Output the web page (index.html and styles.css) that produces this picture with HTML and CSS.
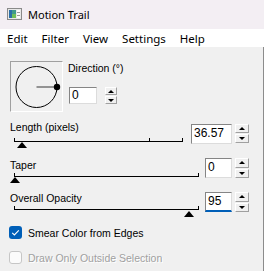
FILE: index.html
```html
<!DOCTYPE html>
<html lang="en">
<head>
  <meta charset="UTF-8" />
  <title>Motion Trail</title>
  <link rel="stylesheet" href="styles.css">
</head>
<body>
  <div class="titlebar">
    <svg class="app-icon" width="15" height="12" viewBox="0 0 15 12">
      <rect x="0.5" y="0.5" width="14" height="11" fill="#e8e8e8" stroke="#8a8a8a" />
      <rect x="2" y="2" width="7" height="8" fill="#3f9a8c" />
      <rect x="2" y="2" width="3" height="8" fill="#2b6fa8" />
      <rect x="5" y="6" width="4" height="4" fill="#6fbf5a" />
      <rect x="10" y="2" width="3" height="8" fill="#fdfdfd" />
      <line x1="10" y1="4.5" x2="13" y2="4.5" stroke="#9a9a9a" />
      <line x1="10" y1="7.5" x2="13" y2="7.5" stroke="#9a9a9a" />
    </svg>
    <span class="title">Motion Trail</span>
  </div>

  <div class="menubar">
    <span>Edit</span>
    <span>Filter</span>
    <span>View</span>
    <span>Settings</span>
    <span>Help</span>
  </div>

  <div class="dialog">
    <div class="dir-row">
      <div class="dial">
        <svg width="51" height="49" viewBox="0 0 51 49">
          <circle cx="25.5" cy="25" r="20.5" fill="none" stroke="#000" stroke-width="1" />
          <line x1="25.5" y1="25" x2="46" y2="25" stroke="#555" stroke-width="1.2" />
          <circle cx="46" cy="25" r="3.2" fill="#000" />
        </svg>
      </div>
      <div class="dir-controls">
        <div class="label">Direction (°)</div>
        <div class="spin-field">
          <div class="textbox dir-box">0</div>
          <div class="spin dir-spin">
            <span class="spin-btn"><i class="arrow-up"></i></span>
            <span class="spin-btn"><i class="arrow-down"></i></span>
          </div>
        </div>
      </div>
    </div>

    <div class="slider-row row-length">
      <div class="slider">
        <div class="label">Length (pixels)</div>
        <div class="track"><span class="tick" style="left: 134px"></span></div>
        <div class="thumb" style="margin-left: 7px"></div>
      </div>
      <div class="textbox value">36.57</div>
      <div class="spin">
        <span class="spin-btn"><i class="arrow-up"></i></span>
        <span class="spin-btn"><i class="arrow-down"></i></span>
      </div>
    </div>

    <div class="slider-row row-taper">
      <div class="slider">
        <div class="label">Taper</div>
        <div class="track"></div>
        <div class="thumb" style="margin-left: 0px"></div>
      </div>
      <div class="textbox value">0</div>
      <div class="spin">
        <span class="spin-btn"><i class="arrow-up"></i></span>
        <span class="spin-btn"><i class="arrow-down"></i></span>
      </div>
    </div>

    <div class="slider-row row-opacity">
      <div class="slider">
        <div class="label">Overall Opacity</div>
        <div class="track"></div>
        <div class="thumb" style="margin-left: 174px"></div>
      </div>
      <div class="textbox value focused">95</div>
      <div class="spin">
        <span class="spin-btn"><i class="arrow-up"></i></span>
        <span class="spin-btn"><i class="arrow-down"></i></span>
      </div>
    </div>

    <div class="check-row">
      <span class="checkbox checked">
        <svg width="13" height="13" viewBox="0 0 13 13">
          <path d="M3.2 6.8 L5.4 9 L9.8 4.3" fill="none" stroke="#fff" stroke-width="1.1" />
        </svg>
      </span>
      <span class="check-label">Smear Color from Edges</span>
    </div>

    <div class="check-row second disabled">
      <span class="checkbox"></span>
      <span class="check-label">Draw Only Outside Selection</span>
    </div>
  </div>
</body>
</html>
```

FILE: styles.css
```css
body {
  margin: 0;
  width: 264px;
  height: 271px;
  overflow: hidden;
  font-family: "Liberation Sans", Arial, sans-serif;
  font-size: 10.5px;
  color: #000;
  background: #f0f0f0;
}

.titlebar {
  height: 29px;
  background: #f3eef3;
  display: flex;
  align-items: center;
  padding-left: 7px;
}

.app-icon {
  margin-right: 6px;
  margin-top: -1px;
}

.title {
  font-family: "Noto Sans", sans-serif;
  font-size: 11px;
}

.menubar {
  height: 18px;
  background: #fff;
  display: flex;
  align-items: center;
  font-family: "Noto Sans", sans-serif;
  font-size: 11.5px;
}

.menubar span {
  padding: 0 7px;
}

.dialog {
  height: 224px;
  box-sizing: border-box;
  padding-top: 14px;
  border-right: 1px solid #8c8c8c;
}

.label {
  height: 14px;
  line-height: 14px;
  white-space: nowrap;
}

/* direction */
.dir-row {
  display: flex;
  padding-left: 10px;
}

.dial {
  width: 53px;
  height: 51px;
  box-sizing: border-box;
  border: 1px solid;
  border-color: #a0a0a0 #ffffff #ffffff #a0a0a0;
}

.dial svg {
  display: block;
}

.dir-controls {
  margin-left: 5px;
}

.spin-field {
  display: flex;
  margin-top: 12px;
  margin-left: 1px;
}

.textbox {
  box-sizing: border-box;
  background: #fff;
  border: 1px solid;
  border-color: #858585 #dcdcdc #dcdcdc #858585;
  padding-left: 2px;
  font-size: 12px;
  line-height: 17px;
}

.dir-box {
  width: 28px;
  height: 17px;
  line-height: 15px;
}

.spin {
  display: flex;
  flex-direction: column;
  gap: 1px;
  width: 14px;
  height: 20px;
  margin-left: 3px;
}

.dir-spin {
  width: 12px;
  height: 17px;
  margin-left: 8px;
}

.spin-btn {
  flex: 1;
  display: flex;
  align-items: center;
  justify-content: center;
  box-sizing: border-box;
  border: 1px solid;
  border-color: #ffffff #a0a0a0 #a0a0a0 #ffffff;
  background: #f0f0f0;
}

.arrow-up,
.arrow-down {
  width: 0;
  height: 0;
  border-left: 3px solid transparent;
  border-right: 3px solid transparent;
}

.arrow-up {
  border-bottom: 3px solid #000;
}

.arrow-down {
  border-top: 3px solid #000;
}

/* sliders */
.slider-row {
  display: flex;
  align-items: flex-start;
  padding-left: 10px;
}

.slider {
  flex: none;
}

.track {
  position: relative;
  height: 3px;
  border: 1px solid #000;
  border-top: 0;
  margin-left: 4px;
  margin-top: 1px;
}

.tick {
  position: absolute;
  bottom: 0;
  width: 1px;
  height: 3px;
  background: #000;
}

.thumb {
  width: 0;
  height: 0;
  border-left: 5.5px solid transparent;
  border-right: 5.5px solid transparent;
  border-bottom: 6px solid #000;
}

.row-length {
  margin-top: 8px;
}

.row-length .slider {
  width: 173px;
}

.row-length .track {
  margin-top: 4px;
}

.row-length .textbox {
  width: 41px;
  height: 20px;
  margin-left: 8px;
  margin-top: 4px;
}

.row-length .spin {
  margin-top: 4px;
  height: 19px;
}

.row-taper {
  margin-top: 10px;
}

.row-taper .slider,
.row-opacity .slider {
  width: 189px;
}

.row-taper .textbox,
.row-opacity .textbox {
  width: 27px;
  height: 20px;
  margin-left: 6px;
}

.row-opacity {
  margin-top: 8px;
}

.row-opacity .thumb {
  margin-top: 1px;
}

.row-opacity .textbox,
.row-opacity .spin {
  margin-top: 1px;
}

.textbox.focused {
  border-bottom: 2px solid #005fb8;
  line-height: 16px;
}

/* checkboxes */
.check-row {
  display: flex;
  align-items: center;
  height: 17px;
  margin-top: 7px;
  padding-left: 9px;
}

.check-row.second {
  margin-top: 8px;
}

.checkbox {
  width: 13px;
  height: 13px;
  box-sizing: border-box;
  border-radius: 3px;
  border: 1px solid #c6c6c6;
  background: #fbfbfb;
}

.checkbox.checked {
  border: 0;
  background: #005fb8;
}

.checkbox svg {
  display: block;
}

.check-label {
  margin-left: 6px;
}

.disabled .check-label {
  color: #a0a0a0;
  text-shadow: 1px 1px 0 #fff;
}
```
